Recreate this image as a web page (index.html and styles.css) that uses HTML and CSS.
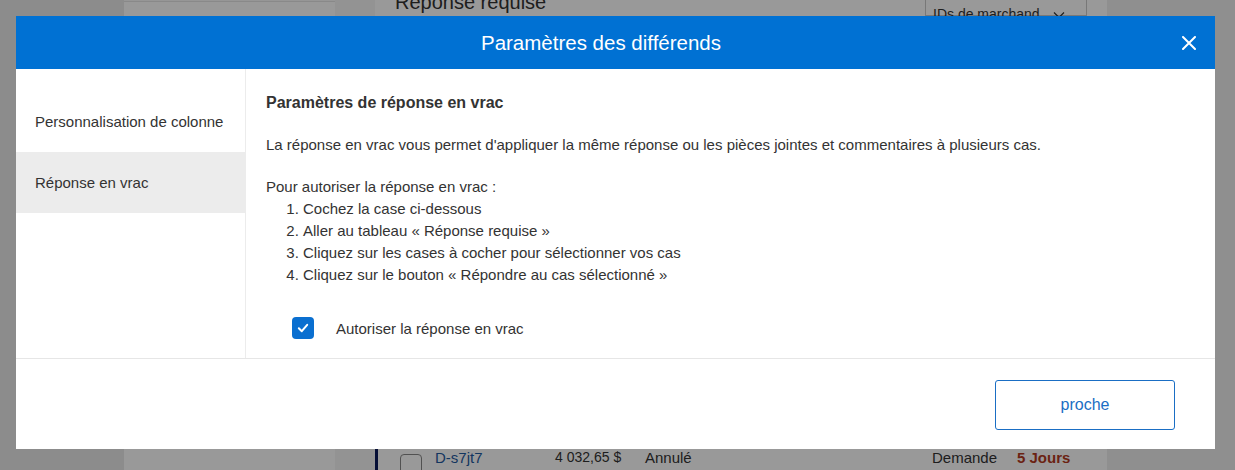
FILE: index.html
```html
<!DOCTYPE html>
<html lang="fr">
<head>
<meta charset="utf-8">
<title>Paramètres des différends</title>
<link rel="stylesheet" href="styles.css">
</head>
<body>
<div class="page">
  <aside class="rail"></aside>
  <nav class="side"><div class="side-box"></div></nav>
  <div class="gutter"></div>
  <main class="main">
    <div class="main-top">
      <h2 class="main-title">Réponse requise</h2>
      <div class="select">IDs de marchand
        <svg class="chev" width="12" height="8" viewBox="0 0 12 8"><path d="M1 1.5 L6 6.5 L11 1.5" stroke="#333" stroke-width="1.2" fill="none"/></svg>
      </div>
    </div>
    <div class="main-row">
      <span class="row-check"></span>
      <span class="row-id">D-s7jt7</span>
      <span class="row-amount">4 032,65 $</span>
      <span class="row-status">Annulé</span>
      <span class="row-type">Demande</span>
      <span class="row-days">5 Jours</span>
    </div>
  </main>
  <div class="right"></div>
</div>
<div class="overlay"></div>

<div class="modal" role="dialog">
  <header class="modal-head">
    <h1 class="modal-title">Paramètres des différends</h1>
    <button class="close" aria-label="Fermer">
      <svg width="14" height="14" viewBox="0 0 14 14"><path d="M1 1 L13 13 M13 1 L1 13" stroke="#fff" stroke-width="2" stroke-linecap="round" fill="none"/></svg>
    </button>
  </header>
  <div class="modal-body">
    <ul class="tabs">
      <li class="tab">Personnalisation de colonne</li>
      <li class="tab active">Réponse en vrac</li>
    </ul>
    <section class="panel">
      <h3 class="panel-title">Paramètres de réponse en vrac</h3>
      <p class="intro">La réponse en vrac vous permet d'appliquer la même réponse ou les pièces jointes et commentaires à plusieurs cas.</p>
      <p class="steps-title">Pour autoriser la réponse en vrac :</p>
      <ol class="steps">
        <li>Cochez la case ci-dessous</li>
        <li>Aller au tableau « Réponse requise »</li>
        <li>Cliquez sur les cases à cocher pour sélectionner vos cas</li>
        <li>Cliquez sur le bouton « Répondre au cas sélectionné »</li>
      </ol>
      <label class="check">
        <span class="box"><svg width="14" height="14" viewBox="0 0 14 14"><path d="M2.8 7.2 L5.8 10.2 L11.2 3.8" stroke="#fff" stroke-width="2" fill="none" stroke-linecap="round" stroke-linejoin="round"/></svg></span>
        <span class="check-label">Autoriser la réponse en vrac</span>
      </label>
    </section>
  </div>
  <footer class="modal-foot">
    <button class="btn">proche</button>
  </footer>
</div>
</body>
</html>
```

FILE: styles.css
```css
* { box-sizing: border-box; }
html, body { margin: 0; padding: 0; }
body {
  width: 1235px;
  height: 470px;
  overflow: hidden;
  font-family: "Liberation Sans", Arial, sans-serif;
  color: #333;
  background: #fff;
}
.page {
  display: grid;
  grid-template-columns: 124px 211px 40px 732px 1fr;
  height: 470px;
}
.rail { background: #e9e9e9; }
.side { background: #fff; }
.side-box { height: 2px; background: #fafafa; border-bottom: 1px solid #e4e4e4; }
.gutter { background: #f5f5f5; }
.main {
  background: #fff;
  display: flex;
  flex-direction: column;
  justify-content: space-between;
}
.main-top {
  display: flex;
  justify-content: space-between;
  align-items: flex-start;
  margin-top: -9px;
  padding: 0 20px 0 20px;
}
.main-title {
  margin: 0;
  font-size: 20px;
  font-weight: 400;
  color: #333;
}
.select {
  width: 162px;
  height: 25px;
  border: 1px solid #c8c8c8;
  border-top: 0;
  font-size: 14px;
  padding: 15px 0 0 7px;
  color: #333;
  display: flex;
  align-items: flex-start;
}
.chev { margin-left: 13px; margin-top: 5px; }
.main-row {
  display: flex;
  align-items: center;
  height: 26px;
  font-size: 15px;
  padding-left: 22px;
  border-left: 3px solid #0b1a5a;
}
.row-check {
  width: 22px; height: 22px;
  border: 1px solid #888;
  border-radius: 4px;
  background: #fff;
  margin-top: 16px;
  flex: none;
}
.row-id { margin-left: 13px; width: 120px; color: #1f5aa0; }
.row-amount { width: 90px; color: #333; font-size: 14px; }
.row-status { width: 287px; color: #333; }
.row-type { width: 85px; color: #333; }
.row-days { color: #b33a1e; font-weight: 700; }
.right { background: #eeeeee; }
.overlay {
  position: fixed;
  inset: 0;
  background: rgba(0, 0, 0, 0.4);
}

.modal {
  position: fixed;
  left: 16px;
  top: 16px;
  width: 1199px;
  height: 433px;
  background: #fff;
  display: flex;
  flex-direction: column;
}
.modal-head {
  height: 53px;
  background: #0071d3;
  display: flex;
  align-items: center;
  padding: 0 19px 0 0;
}
.modal-title {
  flex: 1;
  margin: 0;
  text-align: center;
  font-size: 20.5px;
  font-weight: 400;
  color: #fff;
  padding-left: 4px;
}
.close {
  border: 0;
  background: none;
  padding: 0;
  width: 14px;
  height: 14px;
  display: flex;
  align-items: center;
  justify-content: center;
}
.modal-body {
  height: 290px;
  display: flex;
  border-bottom: 1px solid #e6e6e6;
}
.tabs {
  list-style: none;
  margin: 0;
  padding: 22px 0 0;
  width: 230px;
  border-right: 1px solid #ececec;
}
.tab {
  height: 61px;
  display: flex;
  align-items: center;
  padding-left: 19px;
  font-size: 15px;
  color: #333;
}
.tab.active { background: #ececec; }
.panel {
  flex: 1;
  padding: 23px 0 0 20px;
  font-size: 15px;
  color: #333;
}
.panel-title {
  margin: 0;
  font-size: 16px;
  font-weight: 700;
  line-height: 22px;
  color: #333;
}
.intro { margin: 20px 0 0; line-height: 22px; }
.steps-title { margin: 20px 0 0; line-height: 22px; }
.steps {
  margin: 0;
  padding-left: 37px;
  line-height: 22px;
}
.check {
  display: flex;
  align-items: center;
  margin: 31px 0 0 26px;
}
.box {
  width: 22px;
  height: 22px;
  border-radius: 4px;
  background: #0a6fd0;
  display: flex;
  align-items: center;
  justify-content: center;
}
.check-label { margin-left: 22px; }
.modal-foot {
  flex: 1;
  display: flex;
  justify-content: flex-end;
  align-items: flex-start;
  padding: 21px 40px 0 0;
}
.btn {
  width: 180px;
  height: 50px;
  border: 1px solid #1a6ec4;
  border-radius: 3px;
  background: #fff;
  color: #1a6ec4;
  font-family: "Liberation Sans", Arial, sans-serif;
  font-size: 16px;
}
```
